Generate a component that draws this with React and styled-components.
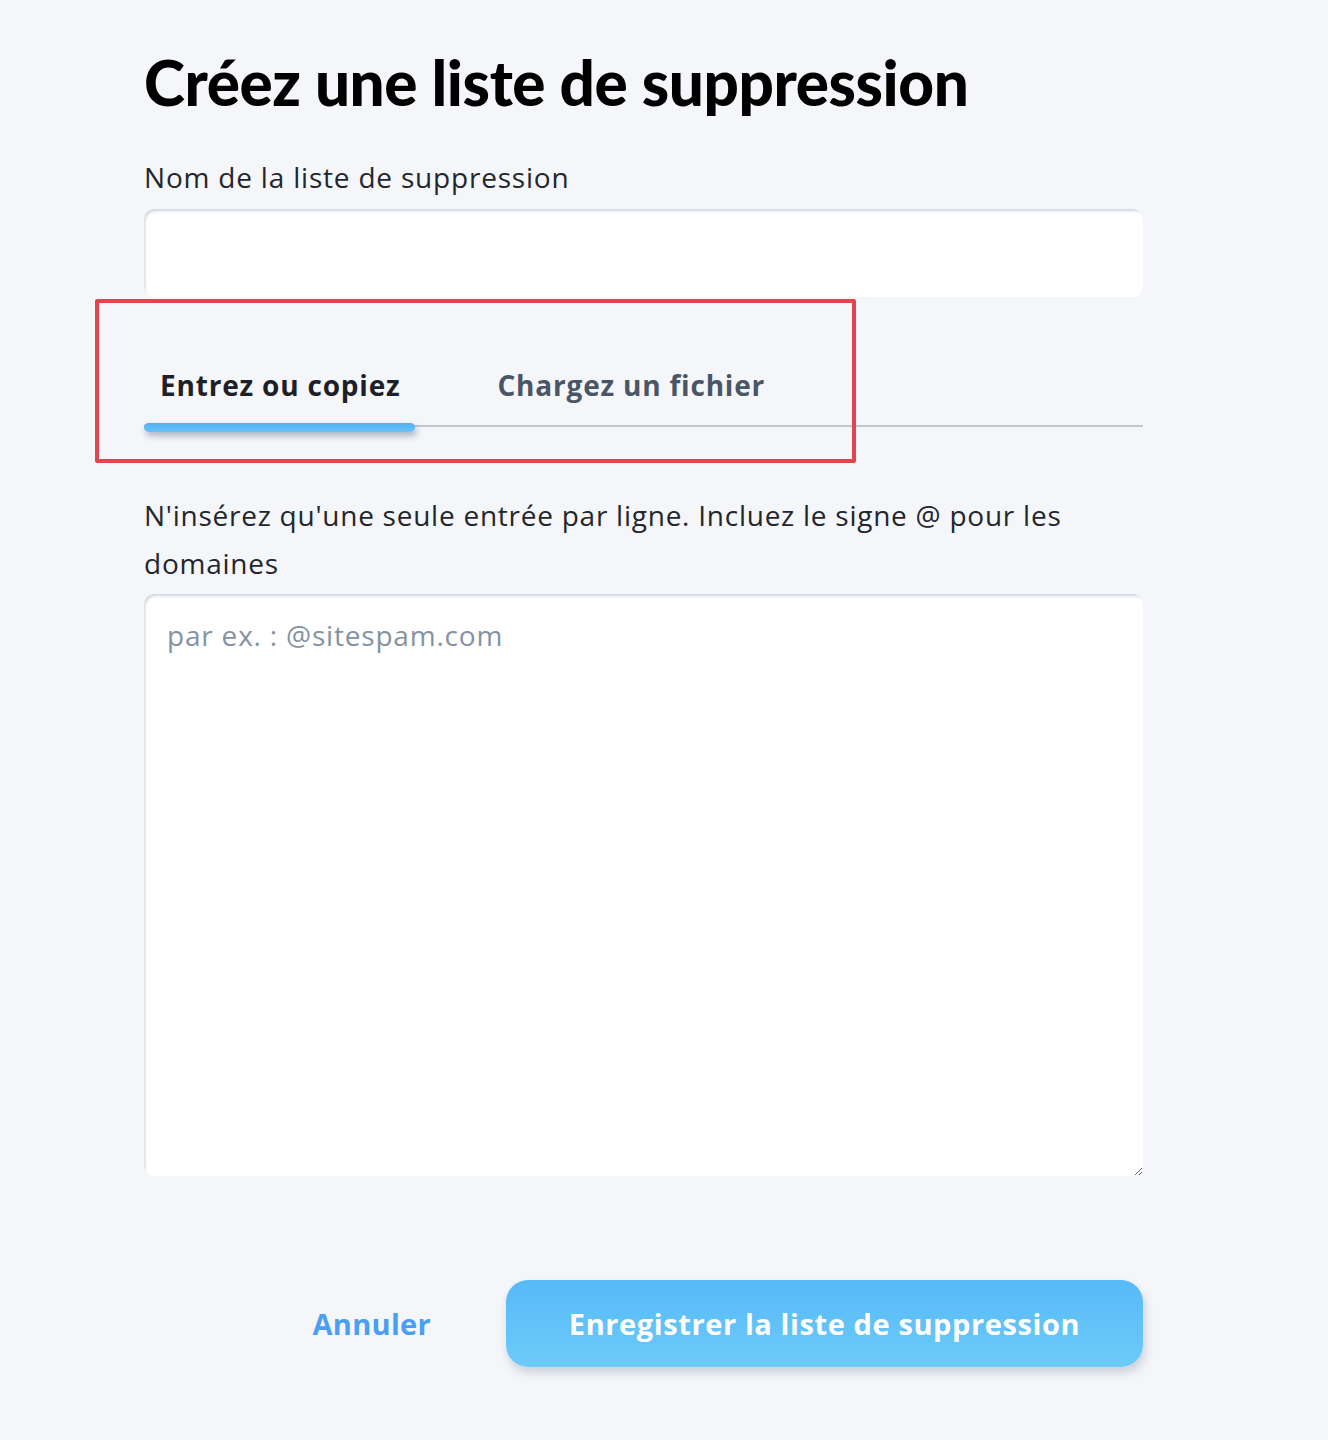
import styled, { createGlobalStyle } from "styled-components";

const GlobalStyle = createGlobalStyle`
  html, body {
    margin: 0;
    padding: 0;
    background: #f5f6fa;
  }
  body {
    font-family: "Open Sans", Lato, "Noto Sans", sans-serif;
    color: #1d2127;
  }
`;

export default function App() {
  return (
    <>
      <GlobalStyle />
      <Page>
        <Title>Créez une liste de suppression</Title>

        <Label htmlFor="name">Nom de la liste de suppression</Label>
        <TextInput id="name" type="text" />

        <Tabs>
          <Tab $active>Entrez ou copiez</Tab>
          <Tab>Chargez un fichier</Tab>
          <Highlight />
        </Tabs>

        <Help>
          N'insérez qu'une seule entrée par ligne. Incluez le signe @ pour les
          domaines
        </Help>
        <Entries placeholder="par ex. : @sitespam.com" />

        <Actions>
          <CancelButton type="button">Annuler</CancelButton>
          <SaveButton type="button">Enregistrer la liste de suppression</SaveButton>
        </Actions>
      </Page>
    </>
  );
}

const Page = styled.main`
  width: 999px;
  margin-left: 144px;
  padding: 42px 0 72px;
  display: flex;
  flex-direction: column;
`;

const Title = styled.h1`
  margin: 0 0 38px;
  font-family: Lato, "Open Sans", sans-serif;
  font-size: 62px;
  font-weight: 900;
  line-height: 80px;
  letter-spacing: -0.4px;
  color: #000;
`;

const Label = styled.label`
  font-size: 28px;
  line-height: 34px;
  letter-spacing: 0.8px;
  color: #23272d;
  margin-bottom: 15px;
`;

const TextInput = styled.input`
  box-sizing: border-box;
  width: 100%;
  height: 88px;
  border: none;
  border-radius: 10px;
  background: #fff;
  box-shadow: inset 2px 3px 3px -1px #cfd5dc;
  outline: none;
  padding: 0 24px;
  font: inherit;
  font-size: 28px;
`;

const Tabs = styled.div`
  position: relative;
  margin-top: 48px;
  display: flex;
  gap: 97px;
  padding-left: 16px;
  border-bottom: 2px solid #c3c6cb;
  height: 82px;
  box-sizing: border-box;
`;

const Tab = styled.button`
  position: relative;
  border: none;
  background: none;
  padding: 0;
  height: 80px;
  align-self: flex-start;
  font-family: inherit;
  font-size: 28px;
  font-weight: 700;
  letter-spacing: 0.8px;
  color: ${(p) => (p.$active ? "#1d2127" : "#4a5566")};
  cursor: pointer;

  &::after {
    content: "";
    display: ${(p) => (p.$active ? "block" : "none")};
    position: absolute;
    left: -16px;
    right: -15px;
    bottom: -7px;
    height: 9px;
    border-radius: 5px;
    background: linear-gradient(#4fb0f5, #6cc2f8);
    box-shadow: 2px 4px 6px rgba(40, 60, 90, 0.35);
  }
`;

const Highlight = styled.div`
  position: absolute;
  left: -49px;
  top: -46px;
  width: 761px;
  height: 164px;
  box-sizing: border-box;
  border: 4px solid #e0464c;
  border-radius: 2px;
  pointer-events: none;
`;

const Help = styled.p`
  margin: 64px 0 7px;
  font-size: 28px;
  line-height: 48px;
  letter-spacing: 0.75px;
  color: #23272d;
`;

const Entries = styled.textarea`
  box-sizing: border-box;
  width: 100%;
  height: 582px;
  border: none;
  border-radius: 10px;
  background: #fff;
  box-shadow: inset 2px 3px 3px -1px #cfd5dc;
  outline: none;
  padding: 21px 23px;
  font-family: inherit;
  font-size: 28px;
  line-height: 40px;
  letter-spacing: 0.8px;
  resize: vertical;

  &::placeholder {
    color: #8393a3;
  }
`;

const Actions = styled.div`
  margin-top: 104px;
  display: flex;
  justify-content: flex-end;
  align-items: center;
  gap: 75px;
`;

const CancelButton = styled.button`
  border: none;
  background: none;
  padding: 0;
  font-family: inherit;
  font-size: 29px;
  font-weight: 700;
  letter-spacing: 0.3px;
  color: #4a9ff2;
  cursor: pointer;
`;

const SaveButton = styled.button`
  width: 637px;
  height: 87px;
  border: none;
  border-radius: 22px;
  background: linear-gradient(#57b9f7, #6ccbf9);
  box-shadow: 2px 6px 10px rgba(60, 80, 110, 0.22);
  font-family: inherit;
  font-size: 29px;
  font-weight: 700;
  letter-spacing: 0.6px;
  color: #fff;
  cursor: pointer;
`;
